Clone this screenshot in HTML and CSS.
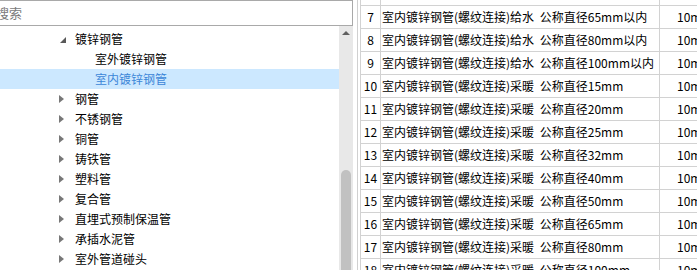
FILE: index.html
```html
<!DOCTYPE html>
<html lang="zh-CN">
<head>
    <meta charset="UTF-8">
    <title>定额查询</title>
    <link rel="stylesheet" href="styles.css">
</head>
<body>
    <div class="app">
        <aside class="side">
            <div class="search">搜索</div>
            <div class="tree-wrap">
                <ul class="tree">
                    <li class="node open"><span class="toggle"></span><span class="label">镀锌钢管</span></li>
                    <li class="node leaf"><span class="label">室外镀锌钢管</span></li>
                    <li class="node leaf selected"><span class="label">室内镀锌钢管</span></li>
                    <li class="node closed"><span class="toggle"></span><span class="label">钢管</span></li>
                    <li class="node closed"><span class="toggle"></span><span class="label">不锈钢管</span></li>
                    <li class="node closed"><span class="toggle"></span><span class="label">铜管</span></li>
                    <li class="node closed"><span class="toggle"></span><span class="label">铸铁管</span></li>
                    <li class="node closed"><span class="toggle"></span><span class="label">塑料管</span></li>
                    <li class="node closed"><span class="toggle"></span><span class="label">复合管</span></li>
                    <li class="node closed"><span class="toggle"></span><span class="label">直埋式预制保温管</span></li>
                    <li class="node closed"><span class="toggle"></span><span class="label">承插水泥管</span></li>
                    <li class="node closed"><span class="toggle"></span><span class="label">室外管道碰头</span></li>
                </ul>
                <div class="vscroll">
                    <span class="arrow-up"></span>
                    <span class="thumb"></span>
                </div>
            </div>
        </aside>

        <div class="split"></div>

        <section class="grid">
            <!-- row 6 is scrolled up out of view, only its bottom line shows -->
            <div class="num"></div><div class="name"></div><div class="unit"></div>
            <div class="num">7</div><div class="name">室内镀锌钢管(螺纹连接)给水 公称直径65mm以内</div><div class="unit">10m</div>
            <div class="num">8</div><div class="name">室内镀锌钢管(螺纹连接)给水 公称直径80mm以内</div><div class="unit">10m</div>
            <div class="num">9</div><div class="name">室内镀锌钢管(螺纹连接)给水 公称直径100mm以内</div><div class="unit">10m</div>
            <div class="num">10</div><div class="name">室内镀锌钢管(螺纹连接)采暖 公称直径15mm</div><div class="unit">10m</div>
            <div class="num">11</div><div class="name">室内镀锌钢管(螺纹连接)采暖 公称直径20mm</div><div class="unit">10m</div>
            <div class="num">12</div><div class="name">室内镀锌钢管(螺纹连接)采暖 公称直径25mm</div><div class="unit">10m</div>
            <div class="num">13</div><div class="name">室内镀锌钢管(螺纹连接)采暖 公称直径32mm</div><div class="unit">10m</div>
            <div class="num">14</div><div class="name">室内镀锌钢管(螺纹连接)采暖 公称直径40mm</div><div class="unit">10m</div>
            <div class="num">15</div><div class="name">室内镀锌钢管(螺纹连接)采暖 公称直径50mm</div><div class="unit">10m</div>
            <div class="num">16</div><div class="name">室内镀锌钢管(螺纹连接)采暖 公称直径65mm</div><div class="unit">10m</div>
            <div class="num">17</div><div class="name">室内镀锌钢管(螺纹连接)采暖 公称直径80mm</div><div class="unit">10m</div>
            <div class="num">18</div><div class="name">室内镀锌钢管(螺纹连接)采暖 公称直径100mm</div><div class="unit">10m</div>
        </section>
    </div>
</body>
</html>
```

FILE: styles.css
```css
/* Reset */
* {
    margin: 0;
    padding: 0;
    box-sizing: border-box;
}

body {
    font-family: "Noto Sans CJK SC", "Noto Sans", sans-serif;
    font-size: 12px;
    color: #000;
    background: #fff;
    width: 697px;
    height: 270px;
    overflow: hidden;
}

.app {
    display: flex;
    height: 270px;
}

/* Left panel: search + tree */
.side {
    width: 353px;
    flex-shrink: 0;
    display: flex;
    flex-direction: column;
}

.search {
    height: 26px;
    margin-left: -9px;
    padding-left: 4px;
    border: 1px solid #a9a9a9;
    font-size: 13px;
    line-height: 23px;
    color: #7b7b7b;
}

.tree-wrap {
    flex: 1;
    display: flex;
    min-height: 0;
}

.tree {
    flex: 1;
    list-style: none;
    padding-top: 3px;
}

.node {
    height: 20px;
    line-height: 20px;
    display: flex;
    align-items: center;
    padding-left: 59px;
    white-space: nowrap;
}

.toggle {
    width: 16px;
    height: 20px;
    position: relative;
}

.closed .toggle::before {
    content: "";
    position: absolute;
    left: 0;
    top: 6px;
    border-left: 5px solid #777;
    border-top: 4px solid transparent;
    border-bottom: 4px solid transparent;
}

.open .toggle::before {
    content: "";
    position: absolute;
    left: 1px;
    top: 8px;
    border-right: 6px solid #595959;
    border-top: 6px solid transparent;
}

.leaf {
    padding-left: 95px;
}

.selected {
    background: #cce8ff;
    color: #3b86d8;
}

/* Vertical scrollbar */
.vscroll {
    width: 14px;
    background: #e8e8e8;
    display: flex;
    flex-direction: column;
    align-items: center;
    padding-top: 5px;
}

.arrow-up {
    width: 0;
    height: 0;
    border-bottom: 4px solid #606060;
    border-left: 4px solid transparent;
    border-right: 4px solid transparent;
}

.thumb {
    width: 10px;
    flex: 1;
    margin-top: 135px;
    background: #c1c1c1;
    border-radius: 5px 5px 0 0;
}

/* Splitter between panels */
.split {
    width: 5px;
    flex-shrink: 0;
    border-right: 1px solid #d0d0d0;
    margin-right: 2px;
}

/* Data grid */
.grid {
    flex: 1;
    align-self: flex-start;
    margin-top: -17px;
    display: grid;
    grid-template-columns: 19px 278px 60px;
    grid-auto-rows: 22px;
    gap: 1px;
    padding-left: 1px;
    background: #d2d2d2;
    font-size: 12px;
    line-height: 22px;
    white-space: nowrap;
}

.grid > div {
    background: #fff;
    overflow: hidden;
}

.num {
    text-align: center;
}

.name {
    padding-left: 1px;
    word-spacing: 3px;
}

.unit {
    padding-left: 17px;
}
```
